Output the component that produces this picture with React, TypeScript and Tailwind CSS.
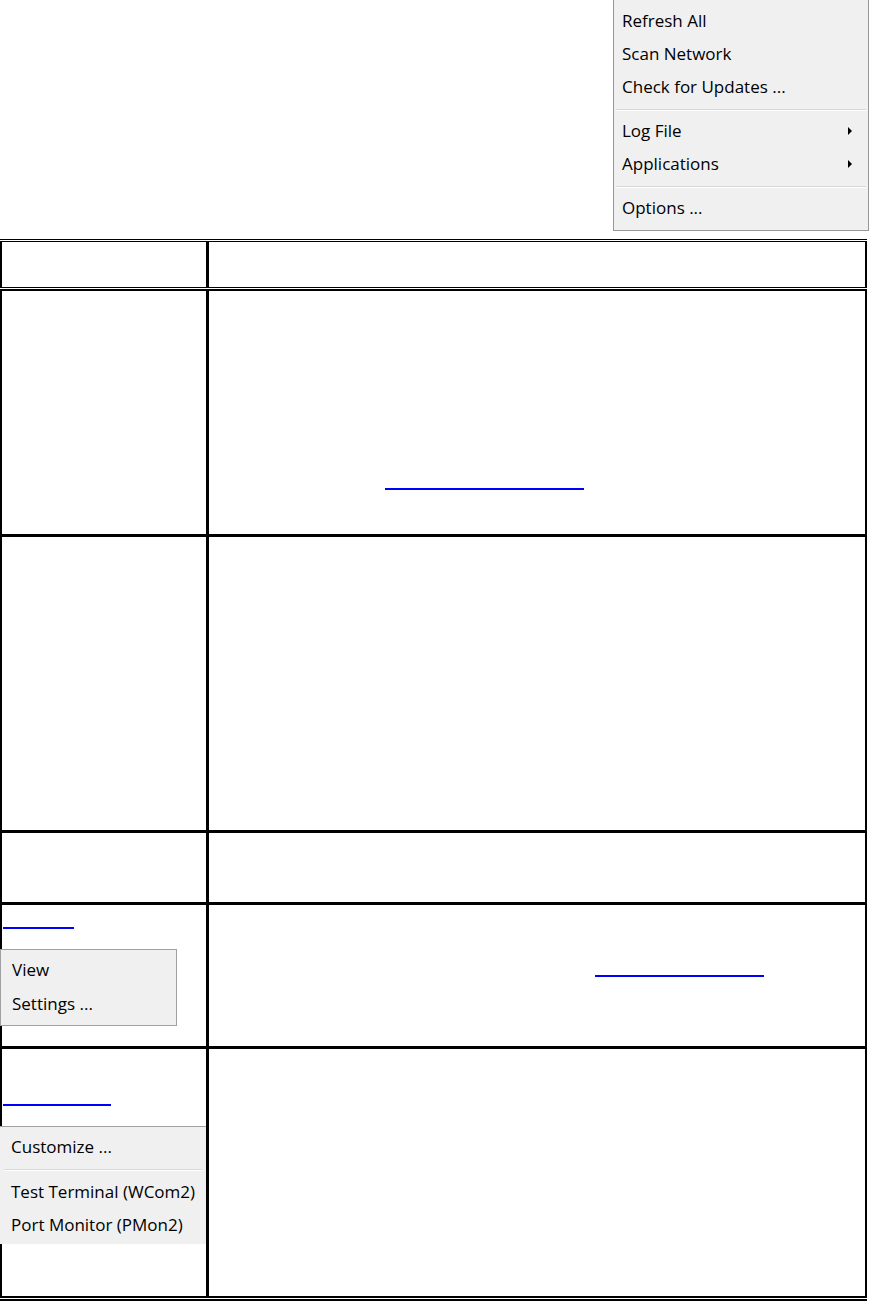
import React from 'react';

type MenuItemProps = {
  label: string;
  submenu?: boolean;
  rowClass?: string;
};

const MenuItem: React.FC<MenuItemProps> = ({ label, submenu, rowClass = 'h-[33px] leading-[33px]' }) => (
  <div className={`flex items-center justify-between whitespace-nowrap text-black ${rowClass}`}>
    <span>{label}</span>
    {submenu && (
      <span className="h-0 w-0 border-y-[4px] border-l-[4px] border-y-transparent border-l-black" />
    )}
  </div>
);

const Separator: React.FC<{ className?: string }> = ({ className = '' }) => (
  <div className={`border-t border-b border-t-[#d7d7d7] border-b-white ${className}`} />
);

const TrayMenu: React.FC = () => (
  <div className="h-[231px] w-[256px] border-x border-b border-[#979797] bg-[#f0f0f0] pt-[4px] text-[17px]">
    <div className="pl-[8px] pr-[16px]">
      <MenuItem label="Refresh All" />
      <MenuItem label="Scan Network" />
      <MenuItem label="Check for Updates ..." />
    </div>
    <Separator className="mx-[2px] mt-[6px] mb-[3px]" />
    <div className="pl-[8px] pr-[16px]">
      <MenuItem label="Log File" submenu />
      <MenuItem label="Applications" submenu />
    </div>
    <Separator className="mx-[2px] mt-[6px] mb-[3px]" />
    <div className="pl-[8px] pr-[16px]">
      <MenuItem label="Options ..." />
    </div>
  </div>
);

const LinkLine: React.FC<{ className: string }> = ({ className }) => (
  <div className={`h-[2px] bg-[#0000ff] ${className}`} />
);

export default function App() {
  return (
    <div className="w-[869px] bg-white font-['Open_Sans',sans-serif]">
      <div className="flex h-[239px] justify-end">
        <TrayMenu />
      </div>

      <div className="w-[867px]">
        <div className="h-px bg-black" />
        <div className="h-px" />

        {/* header row */}
        <div className="flex h-[47px] border-x-2 border-y border-black">
          <div className="w-[207px] border-r-[3px] border-black" />
          <div className="flex-1" />
        </div>

        <div className="h-px" />

        <div className="border-x-2 border-y-2 border-black">
          {/* Menu */}
          <div className="flex h-[246px] border-b-[3px] border-black">
            <div className="w-[207px] border-r-[3px] border-black" />
            <div className="flex-1 pt-[197px]">
              <LinkLine className="ml-[176px] w-[199px]" />
            </div>
          </div>

          <div className="flex h-[296px] border-b-[3px] border-black">
            <div className="w-[207px] border-r-[3px] border-black" />
            <div className="flex-1" />
          </div>

          <div className="flex h-[72px] border-b-[3px] border-black">
            <div className="w-[207px] border-r-[3px] border-black" />
            <div className="flex-1" />
          </div>

          {/* Log File */}
          <div className="flex h-[144px] border-b-[3px] border-black">
            <div className="w-[207px] border-r-[3px] border-black pt-[22px]">
              <LinkLine className="ml-px w-[71px]" />
              <div className="-ml-[2px] mt-[20px] w-[177px] border border-[#a0a0a0] bg-[#f0f0f0] pt-[3px] pb-[4px] pl-[11px] text-[17px]">
                <MenuItem label="View" rowClass="h-[34px] leading-[34px]" />
                <MenuItem label="Settings ..." rowClass="h-[34px] leading-[34px]" />
              </div>
            </div>
            <div className="flex-1 pt-[70px]">
              <LinkLine className="ml-[386px] w-[169px]" />
            </div>
          </div>

          {/* Applications */}
          <div className="flex h-[247px]">
            <div className="w-[207px] border-r-[3px] border-black pt-[55px]">
              <LinkLine className="ml-px w-[108px]" />
              <div className="-ml-[2px] mt-[20px] w-[206px] overflow-hidden border-t border-[#a0a0a0] bg-[#f0f0f0] pt-[3px] pb-[3px] text-[17px]">
                <div className="pl-[11px]">
                  <MenuItem label="Customize ..." />
                </div>
                <Separator className="mx-[4px] mt-[6px] mb-[4px]" />
                <div className="pl-[11px]">
                  <MenuItem label="Test Terminal (WCom2)" />
                  <MenuItem label="Port Monitor (PMon2)" />
                </div>
              </div>
            </div>
            <div className="flex-1" />
          </div>
        </div>

        <div className="h-px" />
        <div className="h-[2px] bg-black" />
      </div>
    </div>
  );
}
